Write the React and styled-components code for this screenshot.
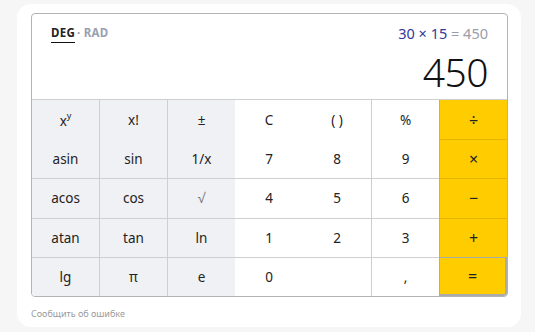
import React from "react";
import styled, { createGlobalStyle } from "styled-components";

const Global = createGlobalStyle`
  html, body { margin: 0; padding: 0; background: #f6f6f6; }
  body { font-family: "Noto Sans", "Open Sans", sans-serif; }
`;

const Page = styled.div`
  width: 535px;
  height: 332px;
  padding: 4px 14px 5px 17px;
  box-sizing: border-box;
`;

const Card = styled.div`
  background: #fff;
  border-radius: 14px;
  width: 504px;
  height: 323px;
  padding: 9px 14px 0 14px;
  box-sizing: border-box;
`;

const Calc = styled.div`
  width: 477px;
  border: 1px solid #b3b3b3;
  border-radius: 4px;
  box-sizing: border-box;
  overflow: hidden;
`;

const Display = styled.div`
  height: 86px;
  box-sizing: border-box;
  padding: 11px 19px 0 19px;
  display: flex;
  flex-direction: column;
  border-bottom: 1px solid #cfcfcf;
`;

const TopLine = styled.div`
  display: flex;
  justify-content: space-between;
  align-items: flex-start;
`;

const Modes = styled.div`
  font-size: 11.5px;
  font-weight: 700;
  letter-spacing: 0.3px;
  color: #9aa0b0;
  display: flex;
  align-items: flex-start;
`;

const Mode = styled.span`
  color: ${(p) => (p.$active ? "#222" : "#9aa0b0")};
  border-bottom: ${(p) => (p.$active ? "1.5px solid #111" : "none")};
  padding-bottom: 2px;
`;

const Dot = styled.span`
  margin: 0 3px 0 2px;
  color: #9aa0b0;
`;

const Expr = styled.div`
  font-size: 14.5px;
  color: #9a9ca8;
  margin-top: -2px;
`;

const ExprMain = styled.span`
  color: #34349a;
`;

const Result = styled.div`
  font-size: 39px;
  font-weight: 300;
  color: #111;
  text-align: right;
  line-height: 1;
  margin-top: 9px;
  letter-spacing: -0.5px;
`;

const Pad = styled.div`
  display: grid;
  grid-template-columns: 67px repeat(6, 1fr);
  grid-auto-rows: 39.2px;
`;

const variantBg = { fn: "#f0f1f4", num: "#ffffff", op: "#ffcc00" };

const Key = styled.div`
  background: ${(p) => variantBg[p.$v]};
  display: flex;
  align-items: center;
  justify-content: center;
  font-size: ${(p) => (p.$v === "op" ? "16px" : "13.5px")};
  color: #222;
  box-sizing: border-box;
  border-left: ${(p) =>
    p.$v === "op" ? "1px solid #e3b500" : p.$l ? "1px solid #cfcfcf" : "none"};
  border-top: ${(p) =>
    p.$v === "op" && p.$t ? "1px solid #e3b500" : p.$t ? "1px solid #cfcfcf" : "none"};
`;

const EqKey = styled(Key)`
  border: 1px solid #ababab;
  border-right-width: 2px;
  border-bottom-width: 2px;
  border-bottom-right-radius: 3px;
`;

const Sup = styled.sup`
  font-size: 9px;
  position: relative;
  top: -1px;
`;

const Report = styled.div`
  font-size: 9px;
  color: #9a9a9a;
  margin-top: 10px;
`;

const rows = [
  [["x^y", "fn"], ["x!", "fn"], ["±", "fn"], ["C", "num"], ["( )", "num"], ["%", "num"], ["÷", "op"]],
  [["asin", "fn"], ["sin", "fn"], ["1/x", "fn"], ["7", "num"], ["8", "num"], ["9", "num"], ["×", "op"]],
  [["acos", "fn"], ["cos", "fn"], ["√", "fn"], ["4", "num"], ["5", "num"], ["6", "num"], ["−", "op"]],
  [["atan", "fn"], ["tan", "fn"], ["ln", "fn"], ["1", "num"], ["2", "num"], ["3", "num"], ["+", "op"]],
  [["lg", "fn"], ["π", "fn"], ["e", "fn"], ["0", "num"], ["", "num"], [",", "num"], ["=", "op"]],
];

export default function App() {
  return (
    <>
      <Global />
      <Page>
        <Card>
          <Calc>
            <Display>
              <TopLine>
                <Modes>
                  <Mode $active>DEG</Mode>
                  <Dot>·</Dot>
                  <Mode>RAD</Mode>
                </Modes>
                <Expr>
                  <ExprMain>30 × 15</ExprMain> = 450
                </Expr>
              </TopLine>
              <Result>450</Result>
            </Display>
            <Pad>
              {rows.map((row, r) =>
                row.map(([label, v], c) => {
                  const l = c === 1 || c === 2 || c === 5;
                  const t = r >= 2 || (v === "op" && r >= 1);
                  const content =
                    label === "x^y" ? (
                      <span>
                        x<Sup>y</Sup>
                      </span>
                    ) : label === "√" ? (
                      <span style={{ color: "#777" }}>√</span>
                    ) : (
                      label
                    );
                  if (label === "=")
                    return (
                      <EqKey key={`${r}-${c}`} $v={v}>
                        {content}
                      </EqKey>
                    );
                  return (
                    <Key key={`${r}-${c}`} $v={v} $l={l} $t={t}>
                      {content}
                    </Key>
                  );
                })
              )}
            </Pad>
          </Calc>
          <Report>Сообщить об ошибке</Report>
        </Card>
      </Page>
    </>
  );
}
